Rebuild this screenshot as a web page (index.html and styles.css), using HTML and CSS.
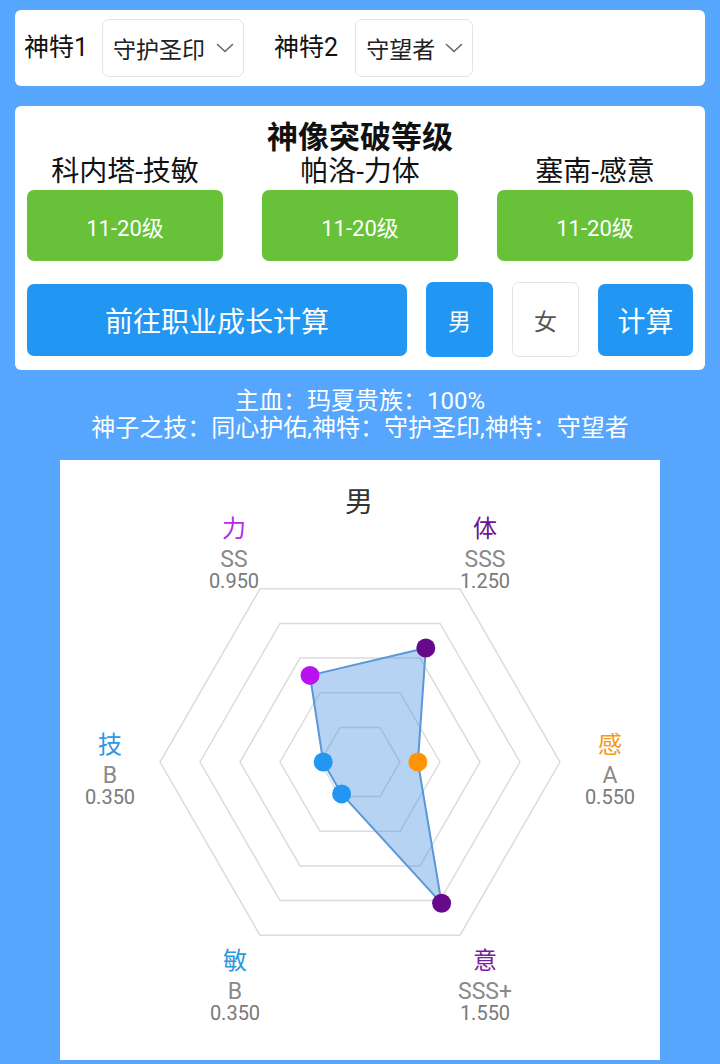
FILE: index.html
```html
<!DOCTYPE html>
<html lang="zh-CN">
<head>
<meta charset="utf-8">
<title>神像突破</title>
<link rel="stylesheet" href="styles.css">
</head>
<body>
<div class="page">
  <section class="card traits">
    <span class="trait-label">神特1</span>
    <div class="select select-1">
      <span>守护圣印</span>
      <svg class="chev" width="18" height="10" viewBox="0 0 18 10"><path d="M1.5 1.5 L9 8.5 L16.5 1.5" fill="none" stroke="#666" stroke-width="1.6" stroke-linecap="round" stroke-linejoin="round"/></svg>
    </div>
    <span class="trait-label second">神特2</span>
    <div class="select select-2">
      <span>守望者</span>
      <svg class="chev" width="18" height="10" viewBox="0 0 18 10"><path d="M1.5 1.5 L9 8.5 L16.5 1.5" fill="none" stroke="#666" stroke-width="1.6" stroke-linecap="round" stroke-linejoin="round"/></svg>
    </div>
  </section>

  <section class="card breakthrough">
    <h1 class="bt-title">神像突破等级</h1>
    <div class="bt-grid">
      <div class="bt-col">
        <div class="bt-name">科内塔-技敏</div>
        <button class="btn btn-green">11-20级</button>
      </div>
      <div class="bt-col">
        <div class="bt-name">帕洛-力体</div>
        <button class="btn btn-green">11-20级</button>
      </div>
      <div class="bt-col">
        <div class="bt-name">塞南-感意</div>
        <button class="btn btn-green">11-20级</button>
      </div>
    </div>
    <div class="actions">
      <button class="btn btn-blue btn-wide">前往职业成长计算</button>
      <button class="btn btn-blue btn-sex">男</button>
      <button class="btn btn-plain btn-sex">女</button>
      <button class="btn btn-blue btn-calc">计算</button>
    </div>
  </section>

  <div class="summary">
    <p>主血：玛夏贵族：100%</p>
    <p>神子之技：同心护佑,神特：守护圣印,神特：守望者</p>
  </div>

  <div class="chart-panel">
    <svg class="radar" width="600" height="600" viewBox="0 0 600 600">
      <text class="r-title" x="299" y="52">男</text>

      <g class="grid">
        <polygon points="500,302 400,128.8 200,128.8 100,302 200,475.2 400,475.2"/>
        <polygon points="460,302 380,163.4 220,163.4 140,302 220,440.6 380,440.6"/>
        <polygon points="420,302 360,198.1 240,198.1 180,302 240,405.9 360,405.9"/>
        <polygon points="380,302 340,232.7 260,232.7 220,302 260,371.3 340,371.3"/>
        <polygon points="340,302 320,267.4 280,267.4 260,302 280,336.6 320,336.6"/>
      </g>

      <polygon class="area" points="250,215.4 365.8,188 357.9,302 381.6,443.3 281.6,333.9 263.2,302"/>

      <circle cx="250" cy="215.4" r="9.5" fill="#bb11f2"/>
      <circle cx="365.8" cy="188" r="9.5" fill="#68098c"/>
      <circle cx="357.9" cy="302" r="9.5" fill="#ff9408"/>
      <circle cx="381.6" cy="443.3" r="9.5" fill="#68098c"/>
      <circle cx="281.6" cy="333.9" r="9.5" fill="#2196f3"/>
      <circle cx="263.2" cy="302" r="9.5" fill="#2196f3"/>

      <g class="axis-label">
        <text class="a-name c-li" x="174" y="77">力</text>
        <text class="a-grade" x="174" y="107">SS</text>
        <text class="a-val" x="174" y="128">0.950</text>

        <text class="a-name c-ti" x="425" y="77">体</text>
        <text class="a-grade" x="425" y="107">SSS</text>
        <text class="a-val" x="425" y="128">1.250</text>

        <text class="a-name c-ji" x="50" y="293">技</text>
        <text class="a-grade" x="50" y="323">B</text>
        <text class="a-val" x="50" y="344">0.350</text>

        <text class="a-name c-gan" x="550" y="293">感</text>
        <text class="a-grade" x="550" y="323">A</text>
        <text class="a-val" x="550" y="344">0.550</text>

        <text class="a-name c-min" x="175" y="509">敏</text>
        <text class="a-grade" x="175" y="539">B</text>
        <text class="a-val" x="175" y="560">0.350</text>

        <text class="a-name c-yi" x="425" y="509">意</text>
        <text class="a-grade" x="425" y="539">SSS+</text>
        <text class="a-val" x="425" y="560">1.550</text>
      </g>
    </svg>
  </div>
</div>
</body>
</html>
```

FILE: styles.css
```css
* {
  box-sizing: border-box;
}

html, body {
  margin: 0;
  padding: 0;
}

body {
  background: #55a6fc;
  font-family: Roboto, "Noto Sans CJK SC", sans-serif;
  color: #111;
  width: 720px;
  height: 1064px;
  overflow: hidden;
}

.page {
  padding: 10px 15px 0;
}

.card {
  background: #fff;
  border-radius: 6px;
}

/* trait selectors */
.traits {
  display: flex;
  align-items: center;
  height: 76px;
  padding: 0 9px;
}

.trait-label {
  font-size: 25px;
  line-height: 30px;
  color: #111;
  margin-right: 14px;
}

.trait-label.second {
  margin-left: 30px;
  margin-right: 17px;
}

.select {
  display: flex;
  align-items: center;
  height: 58px;
  padding: 0 9px 0 10px;
  border: 1px solid #e3e3e3;
  border-radius: 7px;
  font-size: 23px;
  color: #222;
}

.select-1 {
  width: 142px;
}

.select-2 {
  width: 118px;
}

.select span {
  flex: 1;
  white-space: nowrap;
}

.chev {
  flex: none;
  display: block;
}

/* breakthrough card */
.breakthrough {
  margin-top: 20px;
  padding: 14px 12px 13px;
}

.bt-title {
  margin: 0;
  text-align: center;
  font-size: 31px;
  line-height: 36px;
  font-weight: bold;
  color: #111;
}

.bt-grid {
  display: grid;
  grid-template-columns: repeat(3, 1fr);
  column-gap: 39px;
}

.bt-col {
  display: flex;
  flex-direction: column;
  align-items: stretch;
}

.bt-name {
  text-align: center;
  font-size: 28px;
  line-height: 31px;
  color: #111;
  margin-bottom: 3px;
}

.btn {
  border: none;
  border-radius: 7px;
  font-family: Roboto, "Noto Sans CJK SC", sans-serif;
  color: #fff;
  padding: 0;
  cursor: pointer;
}

.btn-green {
  background: #67c23a;
  height: 71px;
  font-size: 22px;
}

.actions {
  display: flex;
  align-items: center;
  gap: 19px;
  margin-top: 21px;
  height: 75px;
}

.btn-blue {
  background: #2196f3;
}

.btn-wide {
  flex: 1;
  height: 72px;
  font-size: 28px;
}

.btn-sex {
  width: 67px;
  height: 75px;
  font-size: 23px;
}

.btn-plain {
  background: #fff;
  border: 1px solid #e3e3e3;
  color: #555;
}

.btn-calc {
  width: 95px;
  height: 72px;
  font-size: 28px;
}

/* summary text */
.summary {
  margin-top: 18px;
  text-align: center;
  color: #fff;
  font-size: 24px;
  line-height: 27px;
}

.summary p {
  margin: 0;
}

/* radar chart */
.chart-panel {
  width: 600px;
  height: 600px;
  margin: 18px auto 0;
  background: #fff;
}

.radar {
  display: block;
}

.r-title {
  font-family: "Noto Sans CJK SC", sans-serif;
  font-size: 28px;
  fill: #333;
  text-anchor: middle;
}

.grid polygon {
  fill: none;
  stroke: #dcdcdc;
  stroke-width: 1.5;
}

.area {
  fill: #4a90e2;
  fill-opacity: 0.4;
  stroke: #5a97d8;
  stroke-width: 2;
  stroke-linejoin: round;
}

.axis-label text {
  text-anchor: middle;
}

.a-name {
  font-family: "Noto Sans CJK SC", sans-serif;
  font-size: 24px;
}

.a-grade {
  font-family: Roboto, sans-serif;
  font-size: 23px;
  fill: #8a8a8a;
}

.a-val {
  font-family: Roboto, sans-serif;
  font-size: 20px;
  fill: #7a7a7a;
}

.c-li { fill: #b02ee6; }
.c-ti { fill: #6a1592; }
.c-ji { fill: #2f97e0; }
.c-gan { fill: #f39a18; }
.c-min { fill: #2f97e0; }
.c-yi { fill: #7a1ca0; }
```
